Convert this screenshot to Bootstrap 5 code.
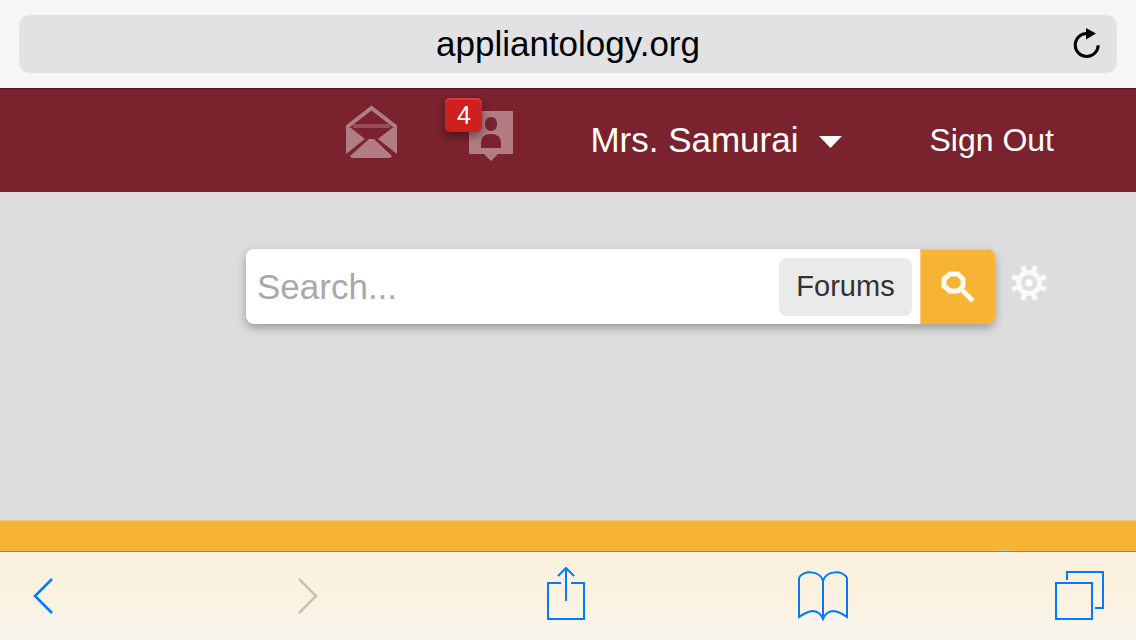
<!DOCTYPE html>
<html lang="en">
<head>
<meta charset="utf-8">
<meta name="viewport" content="width=device-width, initial-scale=1">
<title>appliantology.org</title>
<link href="https://cdn.jsdelivr.net/npm/bootstrap@5.3.0/dist/css/bootstrap.min.css" rel="stylesheet">
<style>
body { font-family: "Liberation Sans", Arial, sans-serif; background: #ddd; }
.btn { --bs-btn-padding-x: 0; --bs-btn-padding-y: 0; --bs-btn-border-width: 0; --bs-btn-border-radius: 0; line-height: 1; }
svg { display: block; }
.browser-top { background: #f6f6f6; padding: 15px 19px; }
.address { background: #e2e2e4; border-radius: 11px; height: 58px; padding: 0 16px 0 44px; }
.address a { color: #000; font-size: 35px; line-height: 40px; }
.site-bar { background: #7a222e; border-top: 1px solid #4f1822; height: 104px; padding: 0 82px 2px 0; }
.user-btn, .user-btn:hover { color: #fff; font-size: 35px; line-height: 40px; margin: 0 83px 0 77px; }
.sign-out { font-size: 32px; line-height: 40px; }
.soft { filter: blur(.5px); }
.inbox-btn { margin-right: 71px; }
.count { left: -24px; top: -13px; width: 37px; height: 34px; background: #cf2020; color: #fff; font-size: 25px; line-height: 34px; border-radius: 5px; box-shadow: 0 4px 8px rgba(0,0,0,.4), inset 0 2px 1px #dc3a3b; }
.search-area { padding: 57px 89px 32px 246px; }
.search-box { background: #fff; height: 75px; border-radius: 8px; box-shadow: 0 4px 10px rgba(0,0,0,.3); }
.search-box input { border: 0; background: transparent; padding: 0 11px; font-size: 35px; height: 75px; min-width: 0; }
.search-box input::placeholder { color: #a9a9a9; opacity: 1; }
.scope-btn { width: 133px; height: 58px; margin-right: 8px; font-size: 29px; --bs-btn-bg: #eaeaea; --bs-btn-color: #323232; --bs-btn-border-radius: 8px; }
.go-btn { width: 75px; height: 75px; --bs-btn-bg: #f7b334; border-radius: 0 8px 8px 0; box-shadow: inset 1px 1px #f9cb75, inset 0 4px #f7b334, inset 0 5px #f8bf58; }
.gold-bar { background: #f7b334; border-top: 1px solid #efc984; height: 31px; }
.gold-bar svg { margin-right: 121px; }
.toolbar { display: grid; grid-template-columns: 265fr 248fr 252fr 257fr 49px; justify-items: start; align-items: center; height: 89px; padding: 0 32px 0 33px; border-top: 1px solid #b48326; background: linear-gradient(#faf0dd, #fbf2e2 55%, #f8f4ef); }
.toolbar svg { fill: none; stroke: #007aff; stroke-width: 2; }
</style>
</head>
<body class="d-flex flex-column min-vh-100">
<header class="browser-top">
  <div class="address d-flex align-items-center">
    <div class="flex-grow-1 text-center"><a class="text-decoration-none" href="#">appliantology.org</a></div>
    <button class="btn" type="button" aria-label="Reload"><svg width="28" height="32" viewBox="0 1 28 32"><path d="M13.500 6.500A11.500 11.500 0 1 0 25.200 18.200" fill="none" stroke="#000" stroke-width="3"/><path d="M13 1l10 5.500-10 6z"/></svg></button>
  </div>
</header>
<nav class="site-bar d-flex justify-content-end align-items-center" aria-label="Account">
  <button class="btn inbox-btn soft" type="button" aria-label="Messages">
    <svg class="mb-3" width="53" height="54" viewBox="0 0 53 54"><path d="M2 22L26.500 3 51 22" fill="none" stroke="#b17c82" stroke-width="4"/><path d="M8 19h37v4H8z" fill="#975058"/><path d="M1 21l5 2 14 11L1 49zM52 21l-5 2-14 11 19 15zM24 34h5l18 17q-1 2-3 2H8q-2 0-3-2z" fill="#b17c82"/></svg>
  </button>
  <div class="position-relative mb-2">
    <button class="btn soft" type="button" aria-label="Notifications">
      <svg width="44" height="50" viewBox="0 0 44 50"><path fill="#b17c82" d="M0 0h44v43H29l-7 7-7-7H0z"/><path fill="#7a222e" d="M22 6c4 0 6 3 6 7s-2 7-6 7-6-3-6-7 2-7 6-7zM12 37v-5q0-9 10-9t10 9v5z"/></svg>
    </button>
    <span class="count position-absolute text-center">4</span>
  </div>
  <button class="btn user-btn d-flex align-items-center" type="button"><span>Mrs. Samurai</span><svg class="ms-3 mt-1" width="32" height="12" viewBox="0 0 32 12"><path fill="#fff" d="M5 0h23L16.500 12z"/></svg></button>
  <a class="sign-out text-white text-decoration-none" href="#">Sign Out</a>
</nav>
<main class="flex-grow-1">
  <form class="search-area d-flex align-items-center" role="search">
    <div class="search-box d-flex align-items-center flex-grow-1">
      <input class="flex-grow-1" type="text" placeholder="Search..." aria-label="Search">
      <button class="btn scope-btn" type="button">Forums</button>
      <button class="btn go-btn d-flex align-items-center justify-content-center" type="button" aria-label="Search now"><svg class="soft" width="34" height="34" viewBox="0 0 34 34" fill="none" stroke="#fffaf0"><path d="M9 4h8l5 5v7l-5 5H9l-6-5V9z" stroke-width="5" stroke-linejoin="round"/><path d="M20 19l5 5 7 7" stroke-width="5"/></svg></button>
    </div>
    <button class="btn soft ms-3 mb-2" type="button" aria-label="Advanced search"><svg width="36" height="36" viewBox="-18 -18 36 36"><g stroke="#f9f9f9" stroke-width="5"><path d="M-6.500-17L6.500 17M6.500-17L-6.500 17M-17-6.500L17 6.500M-17 6.500L17-6.500"/></g><circle r="13" fill="#f9f9f9"/><circle r="6" fill="#f2f2f2" stroke="#dfdfdf" stroke-width="4"/><circle r="3" fill="#fff"/></svg></button>
  </form>
</main>
<div class="gold-bar d-flex justify-content-end align-items-end"><svg width="20" height="3" viewBox="0 0 20 3"><path fill="#d3c08d" d="M1 3q9-5 17 0z"/></svg></div>
<footer class="toolbar">
  <button class="btn" type="button" aria-label="Back"><svg width="20" height="36" viewBox="0 0 20 36"><path d="M19 1L2 18l17 17" style="stroke-width:2.500"/></svg></button>
  <button class="btn" type="button" aria-label="Forward"><svg width="20" height="36" viewBox="0 0 20 36"><path d="M1 1l17 17L1 35" style="stroke:#c9c1b7;stroke-width:2.500"/></svg></button>
  <button class="btn" type="button" aria-label="Share"><svg class="mb-1" width="40" height="54" viewBox="0 0 40 54"><path d="M15 16H2v36h36V16H25M20 34V2M12 9l8-8 8 8"/></svg></button>
  <button class="btn" type="button" aria-label="Bookmarks"><svg width="50" height="50" viewBox="0 0 50 50"><path d="M25 48V10C22-1 4-1 1 7v39q7-5 13-6 8 0 11 8 3-8 11-8 6 1 13 6V7C46-1 28-1 25 10"/></svg></button>
  <button class="btn" type="button" aria-label="Tabs"><svg width="49" height="50" viewBox="0 1 49 50"><path d="M1 13h36v36H1zM12 10V2h36v36h-8"/></svg></button>
</footer>
<script src="https://cdn.jsdelivr.net/npm/bootstrap@5.3.0/dist/js/bootstrap.bundle.min.js"></script>
</body>
</html>
